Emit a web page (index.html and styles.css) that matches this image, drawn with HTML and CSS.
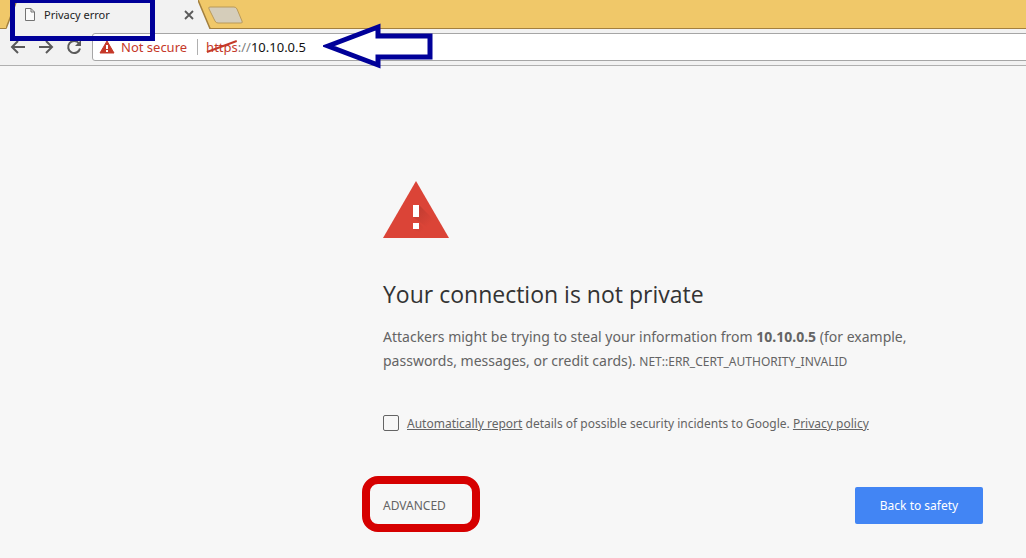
FILE: index.html
```html
<!DOCTYPE html>
<html lang="en">

<head>
    <meta charset="UTF-8">
    <meta name="viewport" content="width=device-width, initial-scale=1.0">
    <title>Privacy error</title>
    <link rel="stylesheet" href="styles.css">
</head>

<body>
    <header class="browser">
        <div class="tab-strip">
            <div class="tab">
                <svg class="tab-edge" width="12" height="29" viewBox="0 0 12 29">
                    <path d="M0 29L11 0H12V29Z" fill="#f2f2f2" />
                    <path d="M0 28.500L11 0" fill="none" stroke="#a3803f" stroke-width="1.500" />
                </svg>
                <div class="tab-body">
                    <svg class="tab-icon" width="12" height="15" viewBox="0 0 12 15">
                        <path d="M1.500 1.500H7L10.500 5V13.500H1.500Z M7 1.500V5H10.500" fill="#fafafa" stroke="#737373" />
                    </svg>
                    <span class="tab-title">Privacy error</span>
                    <button class="tab-close" aria-label="Close tab">
                        <svg width="10" height="10" viewBox="0 0 10 10">
                            <path d="M1 1L9 9M9 1L1 9" stroke="#5a5a5a" stroke-width="1.800" />
                        </svg>
                    </button>
                </div>
                <svg class="tab-edge" width="13" height="29" viewBox="0 0 13 29">
                    <path d="M0 0L12 29H0Z" fill="#f2f2f2" />
                    <path d="M0 0L12 28.500H13" fill="none" stroke="#a3803f" stroke-width="1.500" />
                </svg>
            </div>
            <button class="new-tab" aria-label="New tab">
                <svg width="36" height="18" viewBox="0 0 36 18">
                    <path d="M2 1H26Q28 1 29 3L34 15Q35 17 33 17H10Q8 17 7 15L1 3Q0 1 2 1Z" fill="#d5cdba" stroke="#b99a5b" />
                </svg>
            </button>
        </div>

        <nav class="toolbar">
            <button class="nav-button" aria-label="Back">
                <svg width="16" height="16" viewBox="0 0 16 16">
                    <path d="M15 8H2M8 2L2 8L8 14" fill="none" stroke="#5a5a5a" stroke-width="2" />
                </svg>
            </button>
            <button class="nav-button" aria-label="Forward">
                <svg width="16" height="16" viewBox="0 0 16 16">
                    <path d="M1 8H14M8 2L14 8L8 14" fill="none" stroke="#5a5a5a" stroke-width="2" />
                </svg>
            </button>
            <button class="nav-button" aria-label="Reload">
                <svg width="16" height="16" viewBox="0 0 16 16">
                    <path d="M13 4.500A6 6 0 1 0 14 9.500" fill="none" stroke="#5a5a5a" stroke-width="2" />
                    <path d="M15 1V7H9Z" fill="#5a5a5a" />
                </svg>
            </button>
            <div class="address-bar">
                <svg width="16" height="14" viewBox="0 0 16 14">
                    <path d="M8 1L15 13H1Z" fill="#c53929" stroke="#c53929" stroke-linejoin="round" />
                    <path d="M7 5H9V9H7ZM7 10H9V12H7Z" fill="#fff" />
                </svg>
                <span class="security-label">Not secure</span>
                <span class="url">
                    <span class="url-scheme">https<svg class="strike" viewBox="0 0 34 14" preserveAspectRatio="none">
                            <path d="M1 12L33 1" stroke="#c53929" stroke-width="2" />
                        </svg></span><span class="url-slashes">://</span>10.10.0.5
                </span>
            </div>
        </nav>

        <div class="title-highlight"></div>
        <svg class="arrow" width="112" height="48" viewBox="0 0 112 48">
            <path d="M5 24L55 5V14H107V35H55V43Z" fill="#fff" stroke="#000099" stroke-width="5" />
        </svg>
    </header>

    <main class="warning">
        <svg class="warning-icon" width="66" height="58" viewBox="0 0 66 58">
            <defs>
                <linearGradient id="shadow" gradientUnits="userSpaceOnUse" x1="34" y1="28" x2="48" y2="42">
                    <stop offset="0" stop-color="#a8352b" />
                    <stop offset="1" stop-color="#db4437" />
                </linearGradient>
            </defs>
            <path d="M33 0L66 57H0Z" fill="#db4437" />
            <path d="M36 24L54 42V54L30 36ZM36 42L48 54H42L30 48Z" fill="url(#shadow)" opacity="0.500" />
            <path d="M30 24H36V36H30ZM30 42H36V48H30Z" fill="#fff" />
        </svg>
        <h1>Your connection is not private</h1>
        <p class="message">Attackers might be trying to steal your information from <strong>10.10.0.5</strong> (for example,
            passwords, messages, or credit cards). <span class="error-code">NET::ERR_CERT_AUTHORITY_INVALID</span></p>

        <div class="report">
            <input type="checkbox" id="report">
            <label for="report"><a href="#">Automatically report</a> details of possible security incidents to Google. <a href="#">Privacy policy</a></label>
        </div>

        <div class="actions">
            <button class="advanced">ADVANCED<span class="advanced-highlight"></span></button>
            <button class="safety">Back to safety</button>
        </div>
    </main>
</body>

</html>
```

FILE: styles.css
```css
* {
    box-sizing: border-box;
}

body {
    margin: 0;
    background-color: #f7f7f7;
    color: #646464;
    font-family: "Noto Sans", "Open Sans", sans-serif;
    font-size: 14px;
}

button {
    padding: 0;
    border: 0;
    background: none;
    font-family: inherit;
    cursor: pointer;
}

svg {
    display: block;
    flex-shrink: 0;
}

/* browser window */
.browser {
    position: relative;
    overflow-x: clip;
}

.tab-strip {
    display: flex;
    height: 29px;
    padding-left: 6px;
    background-color: #f0c869;
    box-shadow: inset 0 -1px #a3803f;
}

.tab {
    display: flex;
}

.tab-body {
    display: flex;
    align-items: center;
    width: 180px;
    padding: 0 4px 0 6px;
    background-color: #f2f2f2;
}

.tab-title {
    flex: 1;
    margin-left: 8px;
    color: #222;
    font-size: 11px;
    text-align: left;
}

.new-tab {
    margin-left: -3px;
}

.toolbar {
    display: flex;
    align-items: center;
    height: 37px;
    padding-left: 10px;
    background-color: #f2f2f2;
    border-bottom: 1px solid #b0b0b0;
}

.nav-button {
    margin-right: 12px;
}

.nav-button:nth-child(3) {
    margin-right: 10px;
}

.address-bar {
    flex: 1;
    display: flex;
    align-items: center;
    height: 28px;
    margin-right: -4px;
    padding-left: 6px;
    background-color: #fff;
    border: 1px solid #a6a6a6;
    border-radius: 3px;
    font-size: 13px;
}

.security-label {
    margin-left: 6px;
    padding-right: 10px;
    border-right: 1px solid #b0b0b0;
    color: #c53929;
    line-height: 16px;
}

.url {
    margin-left: 8px;
    color: #111;
}

.url-scheme {
    position: relative;
    color: #c53929;
}

.url-slashes {
    color: #808080;
}

.strike {
    position: absolute;
    left: 0;
    top: 2px;
    width: 100%;
    height: 14px;
}

/* markers drawn over the window */
.title-highlight {
    position: absolute;
    left: 10px;
    top: -2px;
    width: 145px;
    height: 43px;
    border: 5px solid #000099;
}

.arrow {
    position: absolute;
    left: 323px;
    top: 22px;
}

/* warning page */
.warning {
    max-width: 1026px;
    padding: 115px 43px 32px 383px;
}

h1 {
    margin: 39px 0 15px;
    color: #333;
    font-family: "Open Sans", "Noto Sans", sans-serif;
    font-size: 23px;
    font-weight: 400;
    line-height: 32px;
}

.message {
    max-width: 560px;
    margin: 0;
    line-height: 24px;
}

.error-code {
    font-size: 12px;
}

.report {
    display: flex;
    align-items: flex-start;
    margin-top: 40px;
    font-size: 12px;
    line-height: 20px;
}

.report input {
    appearance: none;
    width: 16px;
    height: 16px;
    margin: 1px 8px 0 0;
    border: 1px solid #646464;
    border-radius: 2px;
}

.report a {
    color: inherit;
}

.actions {
    display: flex;
    align-items: center;
    justify-content: space-between;
    margin-top: 53px;
}

.advanced {
    position: relative;
    color: #646464;
    font-size: 12px;
}

.advanced-highlight {
    position: absolute;
    left: -21px;
    top: -21px;
    width: 118px;
    height: 56px;
    border: 8px solid #d60000;
    border-radius: 16px;
}

.safety {
    min-width: 128px;
    height: 37px;
    padding: 0 24px;
    background-color: #4285f4;
    border-radius: 2px;
    color: #fff;
    font-size: 12px;
}
```
